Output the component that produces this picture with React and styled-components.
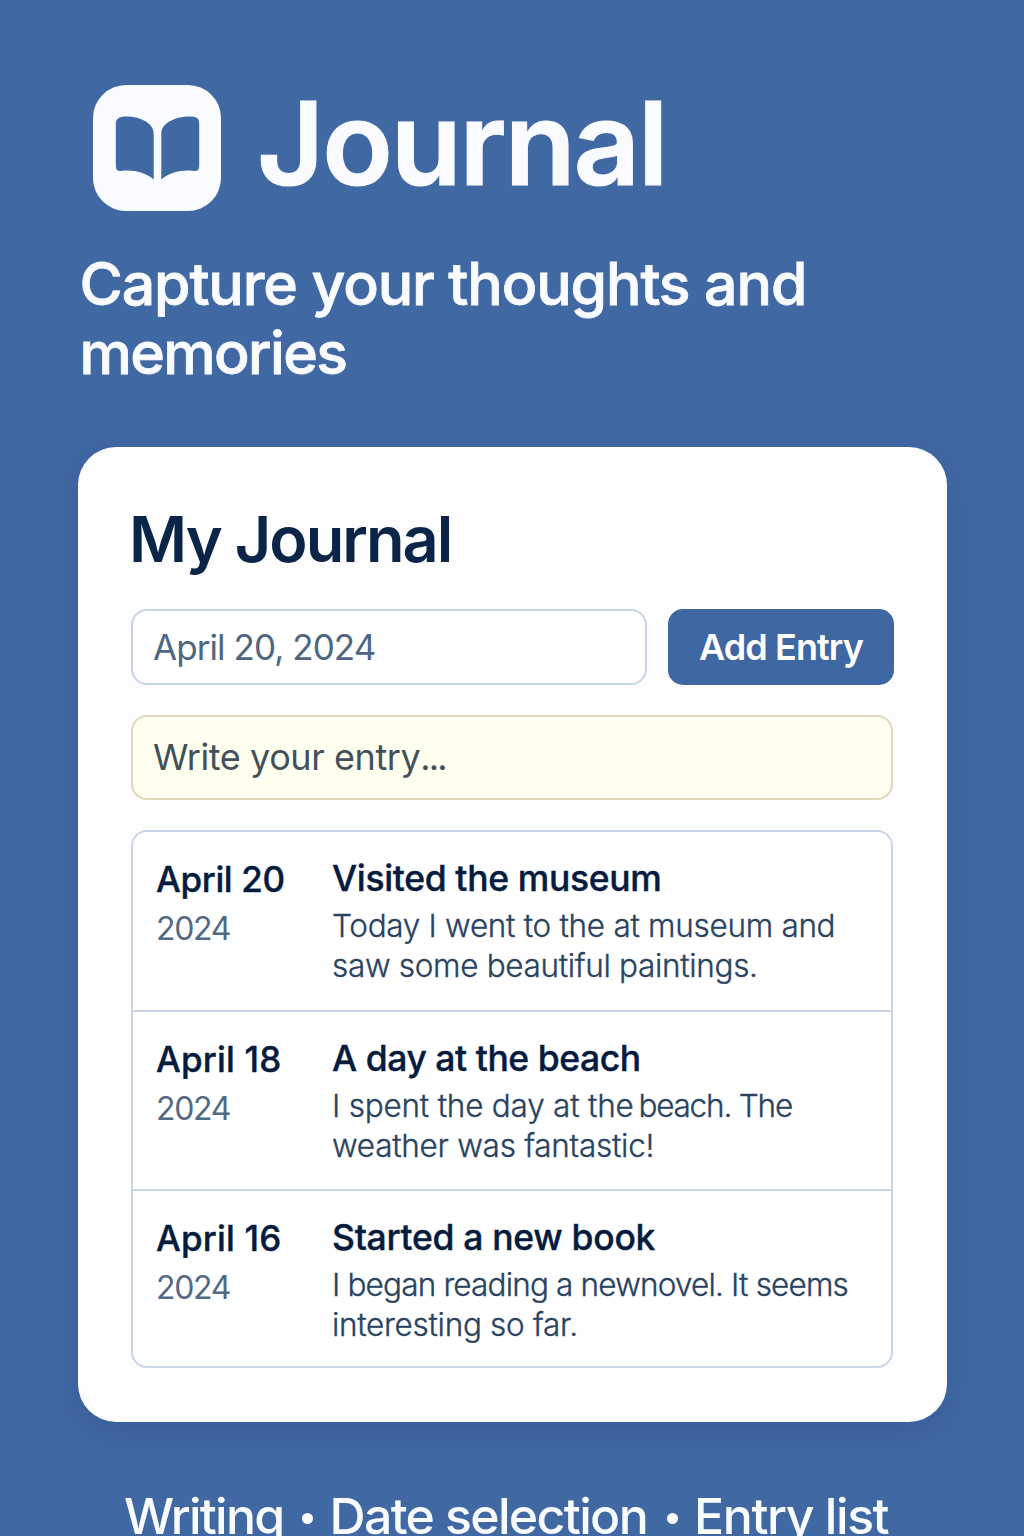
import React from "react";
import styled, { createGlobalStyle } from "styled-components";

const GlobalStyle = createGlobalStyle`
  *, *::before, *::after { box-sizing: border-box; }
  html, body { margin: 0; background: #4068a3; }
  body {
    font-family: Inter, "Liberation Sans", sans-serif;
    -webkit-font-smoothing: antialiased;
  }
  h1, h2, h3, p { margin: 0; }
`;

const Page = styled.main`
  width: 1024px;
  height: 1536px;
  overflow: hidden;
  padding: 85px 77px 0 78px;
  background: #4068a3;
  color: #f9fbff;
`;

const Line = styled.span`
  display: block;
  white-space: pre;
  letter-spacing: ${({ $tracking = 0 }) => $tracking}px;
`;

const Tracked = styled.span`
  letter-spacing: ${({ $tracking }) => $tracking}px;
`;

const Header = styled.header`
  display: flex;
  align-items: flex-start;
  gap: 36px;
  height: 126px;
  padding-left: 15px;
`;

const LogoTile = styled.div`
  display: grid;
  place-items: center;
  width: 128px;
  height: 126px;
  padding: 0 0 0 1px;
  border-radius: 33px;
  background: #f9fbff;
`;

const Brand = styled.h1`
  font-size: 116px;
  font-weight: 600;
  line-height: 117px;
  letter-spacing: -2.1px;
  -webkit-text-stroke: 1.2px currentColor;
`;

const Tagline = styled.p`
  margin: 39px 0 60px;
  padding-left: 1.5px;
  font-size: 59px;
  font-weight: 500;
  line-height: 68.5px;
  -webkit-text-stroke: 0.8px currentColor;
`;

const Card = styled.section`
  height: 975px;
  padding: 54px 53px 0;
  border-radius: 38px;
  background: #fdfdfe;
  box-shadow: 0 8px 28px rgba(22, 50, 100, 0.18);
`;

const CardTitle = styled.h2`
  margin: 0 0 31px -2px;
  font-size: 63px;
  font-weight: 600;
  line-height: 77px;
  letter-spacing: -1.95px;
  color: #0b2548;
`;

const Controls = styled.div`
  display: grid;
  grid-template-columns: 516px 226px;
  gap: 21px;
  margin: 0 0 30px;
`;

const DateField = styled.div`
  height: 76px;
  padding-left: 20px;
  border: 2px solid #c6d4e6;
  border-radius: 16px;
  background: #fff;
  color: #4d6682;
  font-size: 35px;
  line-height: 72px;
`;

const AddButton = styled.button`
  height: 76px;
  padding: 0;
  border: 0;
  border-radius: 15px;
  background: #3f67a2;
  color: #fff;
  font: 600 36px/76px Inter, "Liberation Sans", sans-serif;
  letter-spacing: -0.9px;
`;

const EntryField = styled.div`
  width: 762px;
  height: 85px;
  margin-bottom: 30px;
  padding-left: 20px;
  border: 2px solid #e0d6ba;
  border-radius: 16px;
  background: #fffff0;
  color: #43505a;
  font-size: 36px;
  line-height: 80px;
`;

const EntryList = styled.div`
  width: 762px;
  height: 538px;
  border: 2px solid #c8d6e7;
  border-radius: 16px;
  background: #fff;
`;

const Entry = styled.article`
  display: grid;
  grid-template-columns: 176px 1fr;
  height: 178px;
  padding: 24px 0 0 23px;

  & + & {
    height: 179px;
    border-top: 2px solid #c8d6e7;
  }
`;

const EntryDay = styled.h3`
  font-size: 35px;
  font-weight: 500;
  line-height: 46px;
  color: #061c3f;
  -webkit-text-stroke: 0.4px currentColor;
`;

const EntryYear = styled.p`
  font-size: 32px;
  font-weight: 400;
  line-height: 54px;
  color: #526a84;
`;

const EntryTitle = styled.h3`
  font-size: 35.5px;
  font-weight: 500;
  line-height: 46px;
  color: #061c3f;
  -webkit-text-stroke: 0.4px currentColor;
`;

const EntryText = styled.p`
  margin-top: 4px;
  font-size: 31.5px;
  font-weight: 300;
  line-height: 40px;
  color: #2a435f;
  -webkit-text-stroke: 0.35px currentColor;
`;

const Footer = styled.footer`
  display: flex;
  align-items: center;
  height: 60px;
  margin-top: 64px;
  padding-left: 46px;
  font-size: 50px;
  font-weight: 500;
  line-height: 60px;
`;

const Dot = styled.i`
  flex: none;
  width: 11px;
  height: 11px;
  margin: 5px ${({ $after }) => $after}px 0 ${({ $before }) => $before}px;
  border-radius: 50%;
  background: #f9fbff;
`;

const entries = [
  {
    day: ["April 20", -0.35],
    title: ["Visited the museum", -0.35],
    lines: [["Today I went to the at museum and", -0.3], ["saw some beautiful paintings.", -0.33]],
  },
  {
    day: ["April 18", 0.2],
    title: ["A day at the beach", -0.45],
    lines: [
      [<>I spent the day at the<Tracked $tracking={-4}> </Tracked><Tracked $tracking={-1.2}>beach. The</Tracked></>, -0.22],
      ["weather was fantastic!", -0.27],
    ],
  },
  {
    day: ["April 16", 0.2],
    title: ["Started a new book", -0.3],
    lines: [["I began reading a newnovel. It seems", -0.83], ["interesting so far.", -0.3]],
  },
];

function BookIcon() {
  return (
    <svg width="86" height="64" viewBox="0 0 86 64" fill="#4068a3" aria-hidden="true">
      <path d="M6.5 1C20 -1 38.7 5 38.7 18V63.5C30 56 18 53.5 6 55C2.5 55.3 .8 53.5 .8 50V8C.8 4 3 1.5 6.5 1Z" />
      <path d="M79.5 1C66 -1 46.3 5 46.3 18V63.5C55 56 67 53.5 79 55C82.5 55.3 84.2 53.5 84.2 50V8C84.2 4 83 1.5 79.5 1Z" />
    </svg>
  );
}

export default function App() {
  return (
    <>
      <GlobalStyle />
      <Page>
        <Header>
          <LogoTile><BookIcon /></LogoTile>
          <Brand>Journal</Brand>
        </Header>
        <Tagline>
          <Line $tracking={-1.12}>Capture your thoughts and</Line>
          <Line $tracking={-1.65}>memories</Line>
        </Tagline>
        <Card>
          <CardTitle>My Journal</CardTitle>
          <Controls>
            <DateField><Line $tracking={-0.93}>April 20, 2024</Line></DateField>
            <AddButton type="button">Add Entry</AddButton>
          </Controls>
          <EntryField>
            <Line $tracking={-0.43}>Write your entry<Tracked $tracking={-1.8}>...</Tracked></Line>
          </EntryField>
          <EntryList>
            {entries.map(({ day, title, lines }) => (
              <Entry key={title[0]}>
                <div>
                  <EntryDay><Line $tracking={day[1]}>{day[0]}</Line></EntryDay>
                  <EntryYear><Line $tracking={-1.3}>2024</Line></EntryYear>
                </div>
                <div>
                  <EntryTitle><Line $tracking={title[1]}>{title[0]}</Line></EntryTitle>
                  <EntryText>
                    {lines.map(([text, tracking], i) => (
                      <Line key={i} $tracking={tracking}>{text}</Line>
                    ))}
                  </EntryText>
                </div>
              </Entry>
            ))}
          </EntryList>
        </Card>
        <Footer>
          <Line $tracking={-1.75}>Writing</Line>
          <Dot $before={19} $after={16} />
          <Line $tracking={-1.65}>Date selection</Line>
          <Dot $before={20} $after={16} />
          <Line $tracking={-1.45}>Entry list</Line>
        </Footer>
      </Page>
    </>
  );
}
